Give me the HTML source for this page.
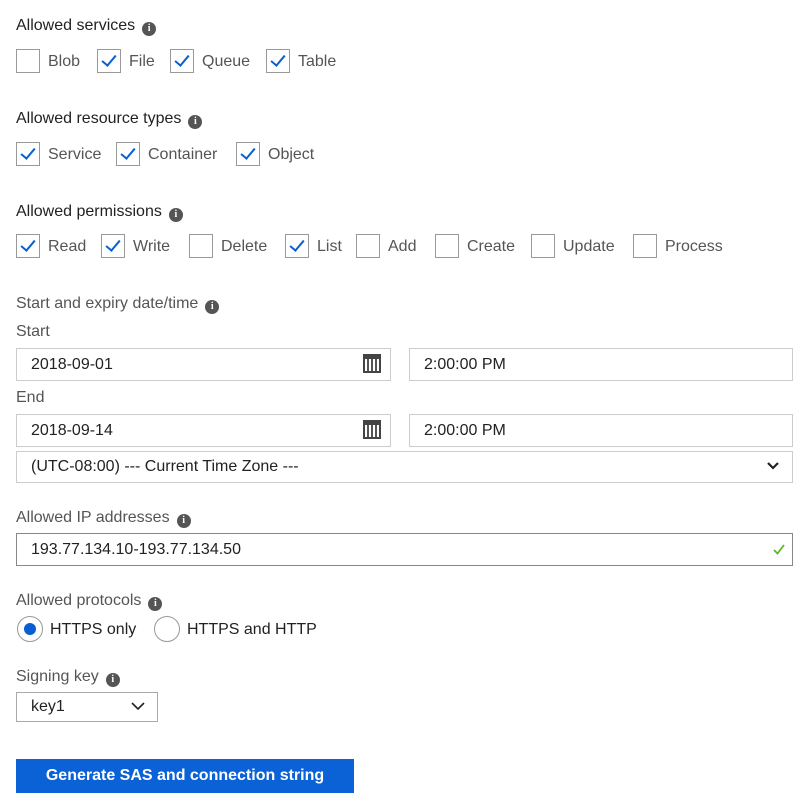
<!DOCTYPE html>
<html><head><meta charset="utf-8"><style>
*{margin:0;padding:0;box-sizing:border-box}
body{width:811px;height:806px;background:#fff;font-family:"Liberation Sans",sans-serif;position:relative;overflow:hidden;color:#444}
.a{position:absolute;white-space:nowrap}
.h{font-size:16px;color:#222}
.t{font-size:16px;color:#555}
.cb{position:absolute;width:24px;height:24px;border:1px solid #999;background:#fff}
.cb.c::after{content:"";position:absolute;left:7px;top:2px;width:6px;height:12px;border-right:2px solid #0a5fd0;border-bottom:2px solid #0a5fd0;transform:rotate(40deg)}
.i{display:inline-block;width:14px;height:14px;border-radius:50%;background:#555;color:#fff;font-size:10px;font-weight:bold;text-align:center;line-height:14px;vertical-align:-1px;margin-left:7px;font-family:"Liberation Serif",serif}
.in{position:absolute;border:1px solid #ccc;background:#fff;font-size:16px;color:#222;padding-left:14px;display:flex;align-items:center}
.cal{position:absolute;width:18px;height:19px;border:2px solid #444;border-top-width:5px;background:repeating-linear-gradient(90deg,#fff 0 2px,#555 2px 4px)}
</style></head><body>
<div class="a h" style="left:16px;top:17px">Allowed services<span class="i">i</span></div>
<div class="cb" style="left:16px;top:49px"></div><div class="a t" style="left:48px;top:53px">Blob</div>
<div class="cb c" style="left:97px;top:49px"></div><div class="a t" style="left:129px;top:53px">File</div>
<div class="cb c" style="left:170px;top:49px"></div><div class="a t" style="left:202px;top:53px">Queue</div>
<div class="cb c" style="left:266px;top:49px"></div><div class="a t" style="left:298px;top:53px">Table</div>

<div class="a h" style="left:16px;top:110px">Allowed resource types<span class="i">i</span></div>
<div class="cb c" style="left:16px;top:142px"></div><div class="a t" style="left:48px;top:146px">Service</div>
<div class="cb c" style="left:116px;top:142px"></div><div class="a t" style="left:148px;top:146px">Container</div>
<div class="cb c" style="left:236px;top:142px"></div><div class="a t" style="left:268px;top:146px">Object</div>

<div class="a h" style="left:16px;top:203px">Allowed permissions<span class="i">i</span></div>
<div class="cb c" style="left:16px;top:234px"></div><div class="a t" style="left:48px;top:238px">Read</div>
<div class="cb c" style="left:101px;top:234px"></div><div class="a t" style="left:133px;top:238px">Write</div>
<div class="cb" style="left:189px;top:234px"></div><div class="a t" style="left:221px;top:238px">Delete</div>
<div class="cb c" style="left:285px;top:234px"></div><div class="a t" style="left:317px;top:238px">List</div>
<div class="cb" style="left:356px;top:234px"></div><div class="a t" style="left:388px;top:238px">Add</div>
<div class="cb" style="left:435px;top:234px"></div><div class="a t" style="left:467px;top:238px">Create</div>
<div class="cb" style="left:531px;top:234px"></div><div class="a t" style="left:563px;top:238px">Update</div>
<div class="cb" style="left:633px;top:234px"></div><div class="a t" style="left:665px;top:238px">Process</div>

<div class="a t" style="left:16px;top:295px">Start and expiry date/time<span class="i">i</span></div>
<div class="a t" style="left:16px;top:323px">Start</div>
<div class="in" style="left:16px;top:348px;width:375px;height:33px">2018-09-01</div>
<div class="cal" style="left:363px;top:354px"></div>
<div class="in" style="left:409px;top:348px;width:384px;height:33px">2:00:00 PM</div>
<div class="a t" style="left:16px;top:389px">End</div>
<div class="in" style="left:16px;top:414px;width:375px;height:33px">2018-09-14</div>
<div class="cal" style="left:363px;top:420px"></div>
<div class="in" style="left:409px;top:414px;width:384px;height:33px">2:00:00 PM</div>
<div class="in" style="left:16px;top:451px;width:777px;height:32px">(UTC-08:00) --- Current Time Zone ---</div>
<svg class="a" style="left:766px;top:461px" width="14" height="10"><path d="M2 2l5 5 5-5" stroke="#222" stroke-width="2.2" fill="none"/></svg>

<div class="a t" style="left:16px;top:509px">Allowed IP addresses<span class="i">i</span></div>
<div class="in" style="left:16px;top:533px;width:777px;height:33px;border-color:#888">193.77.134.10-193.77.134.50</div>
<svg class="a" style="left:772px;top:542px" width="14" height="14"><path d="M2 8l3.5 3.5L12 3" stroke="#5cb82a" stroke-width="1.8" fill="none"/></svg>

<div class="a t" style="left:16px;top:592px">Allowed protocols<span class="i">i</span></div>
<div class="a" style="left:17px;top:616px;width:26px;height:26px;border:1px solid #999;border-radius:50%"><div style="position:absolute;left:6px;top:6px;width:12px;height:12px;border-radius:50%;background:#0a5fd0"></div></div>
<div class="a t" style="left:50px;top:621px;color:#222">HTTPS only</div>
<div class="a" style="left:154px;top:616px;width:26px;height:26px;border:1px solid #999;border-radius:50%"></div>
<div class="a t" style="left:187px;top:621px;color:#222">HTTPS and HTTP</div>

<div class="a t" style="left:16px;top:668px">Signing key<span class="i">i</span></div>
<div class="in" style="left:16px;top:692px;width:142px;height:30px;border-color:#aaa">key1</div>
<svg class="a" style="left:130px;top:701px" width="16" height="10"><path d="M2 2l6 6 6-6" stroke="#222" stroke-width="1.6" fill="none"/></svg>

<div class="a" style="left:16px;top:759px;width:338px;height:34px;background:#0b62d6;color:#fff;font-weight:bold;font-size:16px;text-align:center;line-height:34px">Generate SAS and connection string</div>
</body></html>
